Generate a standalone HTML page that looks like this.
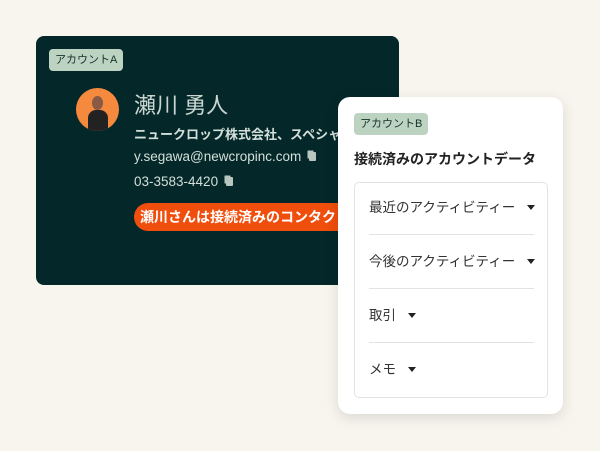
<!DOCTYPE html>
<html><head><meta charset="utf-8"><style>
*{margin:0;padding:0;box-sizing:border-box}
body{width:600px;height:451px;background:#f8f5ee;position:relative;overflow:hidden;font-family:"Liberation Sans","Noto Sans CJK JP",sans-serif}
.a{position:absolute;left:36px;top:36px;width:363px;height:249px;background:#04282a;border-radius:8px;overflow:hidden}
.tag{position:absolute;background:#bcd3c2;color:#14322a;font-size:11px;border-radius:4px;padding:0 6px;height:22px;line-height:22px}
.t{position:absolute;white-space:nowrap;color:#d4dfd9}
.b{position:absolute;left:338px;top:97px;width:225px;height:317px;background:#fff;border-radius:12px;box-shadow:0 4px 14px rgba(0,0,0,.12)}
.list{position:absolute;left:16px;top:85px;width:194px;height:216px;border:1px solid #e3e3e3;border-radius:5px}
.row{position:absolute;left:14px;height:54px;font-size:13.5px;color:#333;line-height:50px;white-space:nowrap}
.row span{display:inline-block;width:0;height:0;border-left:4px solid transparent;border-right:4px solid transparent;border-top:5px solid #222;margin-left:12px;vertical-align:2px}
.sep{position:absolute;left:14px;width:165px;height:1px;background:#e3e3e3}
.cp{display:inline-block;width:7px;height:9px;background:#b8c6c0;border-radius:1px;margin-left:8px;box-shadow:-2px -2px 0 -0.5px #b8c6c0}
</style></head><body>
<div class="a">
<div class="tag" style="left:13px;top:13px">アカウントA</div>
<div style="position:absolute;left:40px;top:52px;width:43px;height:43px;border-radius:50%;background:#f58a3e;overflow:hidden"><div style="position:absolute;left:12px;top:22px;width:20px;height:22px;background:#222;border-radius:8px 8px 0 0"></div><div style="position:absolute;left:16px;top:8px;width:11px;height:14px;background:#8a5a44;border-radius:50%"></div></div>
<div class="t" style="left:98px;top:52px;font-size:22px;color:#c9d6d0">瀬川 勇人</div>
<div class="t" style="left:98px;top:88px;font-size:13px;font-weight:bold">ニュークロップ株式会社、スペシャリスト</div>
<div class="t" style="left:98px;top:113px;font-size:13.5px">y.segawa@newcropinc.com<i class="cp"></i></div>
<div class="t" style="left:98px;top:138px;font-size:13.5px">03-3583-4420<i class="cp"></i></div>
<div style="position:absolute;left:98px;top:167px;width:300px;height:28px;background:#f04e0c;border-radius:14px;color:#fff;font-size:14px;font-weight:bold;line-height:28px;padding-left:6px;white-space:nowrap">瀬川さんは接続済みのコンタクトです</div>
</div>
<div class="b">
<div class="tag" style="left:16px;top:16px;background:#bcd3c2">アカウントB</div>
<div class="t" style="left:16px;top:52px;font-size:14px;font-weight:bold;color:#222">接続済みのアカウントデータ</div>
<div class="list">
<div class="row" style="top:0">最近のアクティビティー<span></span></div>
<div class="sep" style="top:51px"></div>
<div class="row" style="top:54px">今後のアクティビティー<span></span></div>
<div class="sep" style="top:105px"></div>
<div class="row" style="top:108px">取引<span></span></div>
<div class="sep" style="top:159px"></div>
<div class="row" style="top:162px">メモ<span></span></div>
</div>
</div>
</body></html>
